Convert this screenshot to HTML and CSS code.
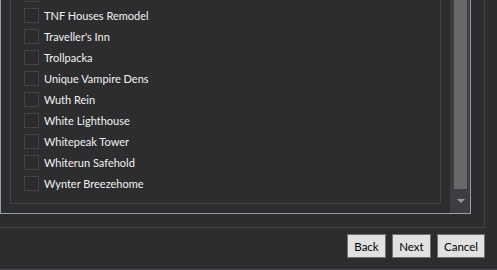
FILE: index.html
```html
<!DOCTYPE html>
<html lang="en">
<head>
    <meta charset="UTF-8">
    <title>Installer</title>
    <link rel="stylesheet" href="styles.css">
</head>
<body>
    <div class="window">
        <div class="scroll-area">
            <div class="viewport">
                <div class="group">
                    <!-- row scrolled above the view, only its box edge shows -->
                    <div class="option"><span class="check"></span></div>
                    <label class="option"><span class="check"></span>TNF Houses Remodel</label>
                    <label class="option"><span class="check"></span>Traveller's Inn</label>
                    <label class="option"><span class="check"></span>Trollpacka</label>
                    <label class="option"><span class="check"></span>Unique Vampire Dens</label>
                    <label class="option"><span class="check"></span>Wuth Rein</label>
                    <label class="option"><span class="check"></span>White Lighthouse</label>
                    <label class="option"><span class="check"></span>Whitepeak Tower</label>
                    <label class="option"><span class="check"></span>Whiterun Safehold</label>
                    <label class="option"><span class="check"></span>Wynter Breezehome</label>
                </div>
            </div>
            <div class="scrollbar">
                <div class="thumb"></div>
                <div class="arrow-btn"><span class="arrow-down"></span></div>
            </div>
        </div>
    </div>

    <div class="buttons">
        <button class="btn btn-small">Back</button>
        <button class="btn btn-small">Next</button>
        <button class="btn btn-wide">Cancel</button>
    </div>

    <div class="bottom-line"></div>
</body>
</html>
```

FILE: styles.css
```css
html, body {
    margin: 0;
    padding: 0;
}
body {
    width: 497px;
    height: 270px;
    overflow: hidden;
    background-color: #2d2d30;
    font-family: Lato, 'Liberation Sans', sans-serif;
    font-size: 11px;
    color: #f1f1f1;
}
.window {
    box-sizing: border-box;
    width: 485px;
    height: 228px;
    border-right: 1px solid #434346;
    border-bottom: 1px solid #434346;
}
.scroll-area {
    box-sizing: border-box;
    display: flex;
    width: 471px;
    height: 214px;
    border: 1px solid #939eae;
    border-top: none;
}
.viewport {
    flex: 1;
    display: flex;
    flex-direction: column;
    justify-content: flex-end;
    overflow: hidden;
    padding: 0 0 9px 9px;
}
.group {
    box-sizing: border-box;
    width: 431px;
    flex-shrink: 0;
    padding: 0 0 9px 13px;
    border: 1px solid #434346;
    border-top: none;
}
.option {
    display: flex;
    align-items: center;
    height: 21px;
    white-space: nowrap;
}
.check {
    box-sizing: border-box;
    width: 15px;
    height: 15px;
    margin-right: 5px;
    border: 1px solid #434346;
    background-color: #2b2b2e;
}
.scrollbar {
    display: flex;
    flex-direction: column;
    width: 20px;
    background-color: #3e3e42;
}
.thumb {
    height: 189px;
    margin: 0 3px 0 4px;
    background-color: #686868;
}
.arrow-btn {
    flex: 1;
    display: flex;
    justify-content: center;
    align-items: center;
}
.arrow-down {
    width: 0;
    height: 0;
    margin-left: 1px;
    border-left: 4px solid transparent;
    border-right: 4px solid transparent;
    border-top: 4px solid #999999;
}
.buttons {
    display: flex;
    justify-content: flex-end;
    gap: 6px;
    width: 485px;
    margin-top: 6px;
}
.btn {
    box-sizing: border-box;
    height: 24px;
    padding: 0;
    border: 1px solid #707070;
    background-color: #e1e1e1;
    color: #000000;
    font-family: Lato, 'Liberation Sans', sans-serif;
    font-size: 11.5px;
}
.btn-small {
    width: 39px;
}
.btn-wide {
    width: 48px;
}
.bottom-line {
    height: 1px;
    margin-top: 11px;
    background-color: #4a4a4e;
}
```
